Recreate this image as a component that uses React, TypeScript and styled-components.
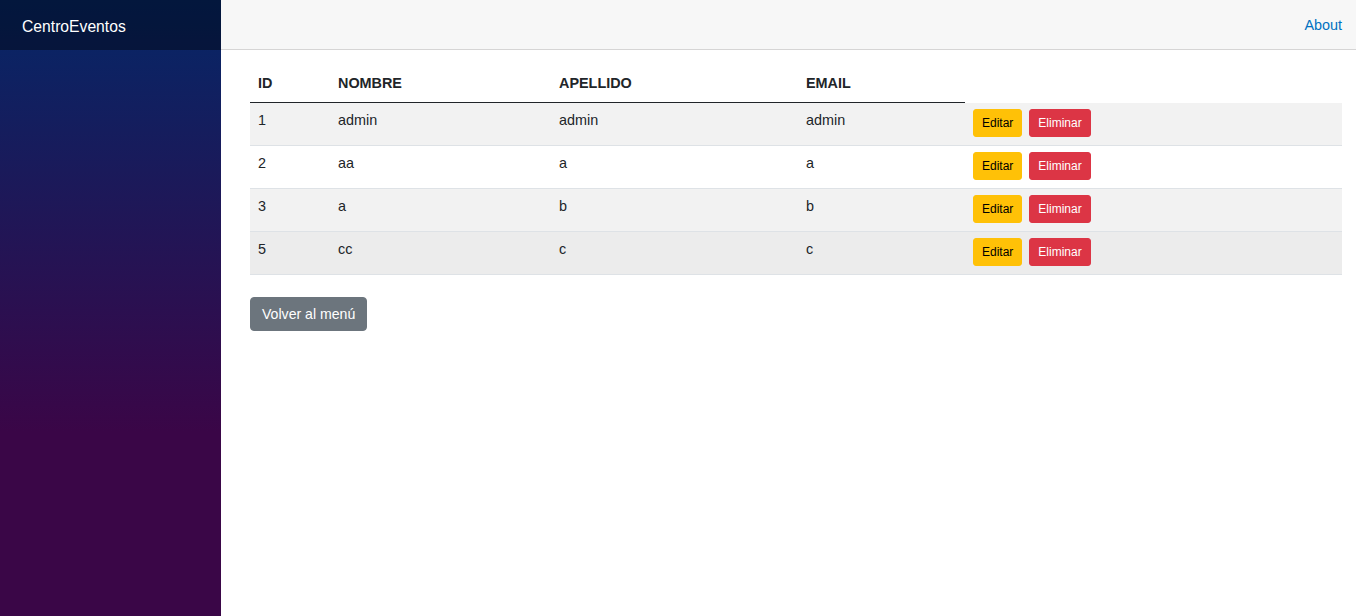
import React from "react";
import styled, { createGlobalStyle } from "styled-components";

const Global = createGlobalStyle`
  html, body { margin: 0; padding: 0; }
  body {
    font-family: "Liberation Sans", Arial, sans-serif;
    color: #212529;
    background: #fff;
  }
  * { box-sizing: border-box; }
`;

const Page = styled.div`
  display: flex;
  min-height: 616px;
`;

const Sidebar = styled.aside`
  width: 221px;
  flex: 0 0 221px;
  background-image: linear-gradient(180deg, rgb(5, 39, 103) 0%, #3a0647 70%);
`;

const SidebarTop = styled.div`
  height: 50px;
  background-color: rgba(0, 0, 0, 0.4);
  display: flex;
  align-items: center;
  padding: 3px 0 0 22px;
`;

const Brand = styled.span`
  color: #fff;
  font-size: 15.7px;
`;

const Main = styled.main`
  flex: 1;
  display: flex;
  flex-direction: column;
`;

const TopRow = styled.div`
  height: 50px;
  background-color: #f7f7f7;
  border-bottom: 1px solid #d6d5d5;
  display: flex;
  align-items: center;
  justify-content: flex-end;
  padding-right: 14px;
`;

const TopLink = styled.a`
  color: #0071c1;
  font-size: 14.4px;
  text-decoration: none;
`;

const Content = styled.div`
  padding: 15px 14px 0 29px;
`;

const Table = styled.table`
  width: 100%;
  border-collapse: separate;
  border-spacing: 0;
  table-layout: fixed;
  font-size: 14.4px;
  line-height: 1.5;
`;

const Th = styled.th`
  text-align: left;
  font-weight: bold;
  line-height: 22px;
  padding: 7px 8px 8px 8px;
  border-bottom: 1px solid #212529;
  vertical-align: bottom;
`;

const Tr = styled.tr<{ $bg: string }>`
  background-color: ${(p) => p.$bg};
`;

const Td = styled.td`
  padding: 7px 8px 0 8px;
  vertical-align: top;
  height: 43px;
  border-bottom: 1px solid #dee2e6;
`;

const ActionTd = styled(Td)`
  padding-top: 6px;
`;

const Actions = styled.div`
  display: flex;
  gap: 7px;
`;

const SmallBtn = styled.button<{ $variant: "warning" | "danger" }>`
  height: 28px;
  padding: 0 8px;
  font-family: "Liberation Sans", Arial, sans-serif;
  font-size: 12px;
  border-radius: 3px;
  border: 1px solid ${(p) => (p.$variant === "warning" ? "#ffc107" : "#dc3545")};
  background-color: ${(p) => (p.$variant === "warning" ? "#ffc107" : "#dc3545")};
  color: ${(p) => (p.$variant === "warning" ? "#000" : "#fff")};
  cursor: pointer;
`;

const BackBtn = styled.button`
  margin-top: 22px;
  height: 34px;
  padding: 0 11px;
  font-family: "Liberation Sans", Arial, sans-serif;
  font-size: 14.1px;
  border-radius: 4px;
  border: 1px solid #6c757d;
  background-color: #6c757d;
  color: #fff;
  cursor: pointer;
`;

const users = [
  { id: 1, nombre: "admin", apellido: "admin", email: "admin" },
  { id: 2, nombre: "aa", apellido: "a", email: "a" },
  { id: 3, nombre: "a", apellido: "b", email: "b" },
  { id: 5, nombre: "cc", apellido: "c", email: "c" },
];

const rowBg = ["#f2f2f2", "#ffffff", "#f2f2f2", "#ececec"];
const colWidths = [80, 221, 247, 167];

export default function App() {
  return (
    <>
      <Global />
      <Page>
        <Sidebar>
          <SidebarTop>
            <Brand>CentroEventos</Brand>
          </SidebarTop>
        </Sidebar>
        <Main>
          <TopRow>
            <TopLink href="#">About</TopLink>
          </TopRow>
          <Content>
            <Table>
              <colgroup>
                {colWidths.map((w) => (
                  <col key={w} style={{ width: w }} />
                ))}
                <col />
              </colgroup>
              <thead>
                <tr>
                  <Th>ID</Th>
                  <Th>NOMBRE</Th>
                  <Th>APELLIDO</Th>
                  <Th>EMAIL</Th>
                </tr>
              </thead>
              <tbody>
                {users.map((u, i) => (
                  <Tr key={u.id} $bg={rowBg[i]}>
                    <Td>{u.id}</Td>
                    <Td>{u.nombre}</Td>
                    <Td>{u.apellido}</Td>
                    <Td>{u.email}</Td>
                    <ActionTd>
                      <Actions>
                        <SmallBtn $variant="warning">Editar</SmallBtn>
                        <SmallBtn $variant="danger">Eliminar</SmallBtn>
                      </Actions>
                    </ActionTd>
                  </Tr>
                ))}
              </tbody>
            </Table>
            <BackBtn>Volver al menú</BackBtn>
          </Content>
        </Main>
      </Page>
    </>
  );
}
